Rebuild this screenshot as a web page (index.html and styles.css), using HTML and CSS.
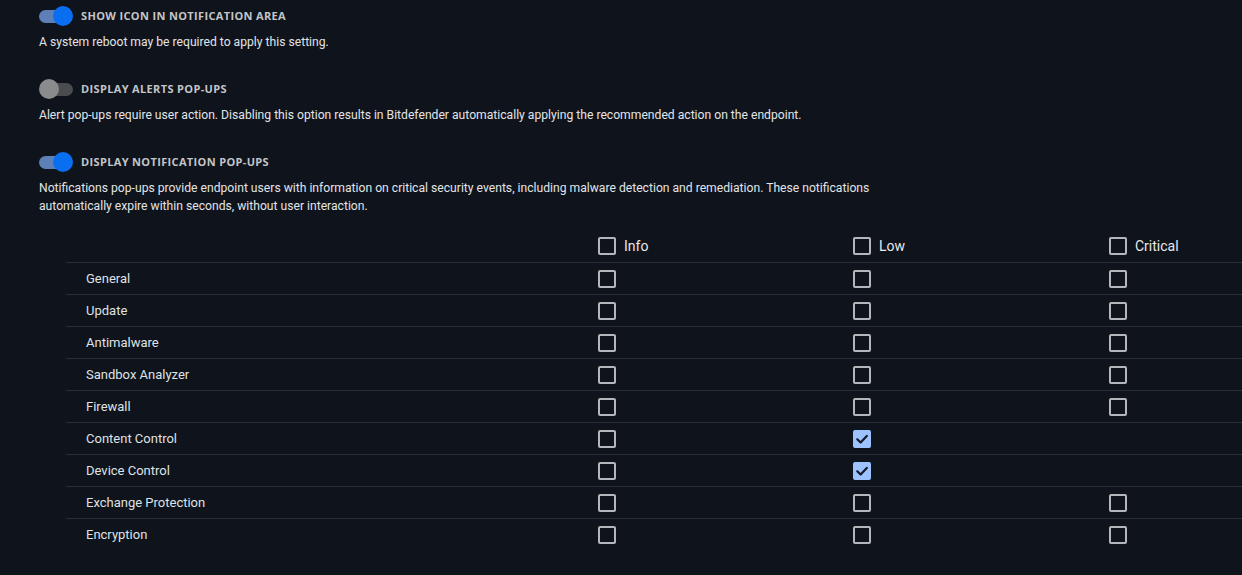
FILE: index.html
```html
<!DOCTYPE html>
<html>
<head>
<meta charset="utf-8">
<link rel="stylesheet" href="styles.css">
</head>
<body>
<div class="page">
  <section class="setting">
    <div class="setting-head">
      <span class="toggle on"><span class="knob"></span></span>
      <span class="setting-title">SHOW ICON IN NOTIFICATION AREA</span>
    </div>
    <p class="desc">A system reboot may be required to apply this setting.</p>
  </section>
  <section class="setting">
    <div class="setting-head">
      <span class="toggle off"><span class="knob"></span></span>
      <span class="setting-title">DISPLAY ALERTS POP-UPS</span>
    </div>
    <p class="desc">Alert pop-ups require user action. Disabling this option results in Bitdefender automatically applying the recommended action on the endpoint.</p>
  </section>
  <section class="setting last">
    <div class="setting-head">
      <span class="toggle on"><span class="knob"></span></span>
      <span class="setting-title">DISPLAY NOTIFICATION POP-UPS</span>
    </div>
    <p class="desc">Notifications pop-ups provide endpoint users with information on critical security events, including malware detection and remediation. These notifications automatically expire within seconds, without user interaction.</p>
  </section>

  <div class="grid">
    <div class="row head">
      <div class="cell label"></div>
      <div class="cell"><span class="cb"></span><span class="col-name">Info</span></div>
      <div class="cell"><span class="cb"></span><span class="col-name">Low</span></div>
      <div class="cell"><span class="cb"></span><span class="col-name">Critical</span></div>
    </div>
    <div class="row"><div class="cell label">General</div><div class="cell"><span class="cb"></span></div><div class="cell"><span class="cb"></span></div><div class="cell"><span class="cb"></span></div></div>
    <div class="row"><div class="cell label">Update</div><div class="cell"><span class="cb"></span></div><div class="cell"><span class="cb"></span></div><div class="cell"><span class="cb"></span></div></div>
    <div class="row"><div class="cell label">Antimalware</div><div class="cell"><span class="cb"></span></div><div class="cell"><span class="cb"></span></div><div class="cell"><span class="cb"></span></div></div>
    <div class="row"><div class="cell label">Sandbox Analyzer</div><div class="cell"><span class="cb"></span></div><div class="cell"><span class="cb"></span></div><div class="cell"><span class="cb"></span></div></div>
    <div class="row"><div class="cell label">Firewall</div><div class="cell"><span class="cb"></span></div><div class="cell"><span class="cb"></span></div><div class="cell"><span class="cb"></span></div></div>
    <div class="row"><div class="cell label">Content Control</div><div class="cell"><span class="cb"></span></div><div class="cell"><span class="cb checked"><svg viewBox="0 0 18 18" width="18" height="18"><path d="M4.3 9.3 L7.6 12.5 L13.8 5.9" fill="none" stroke="#151a24" stroke-width="2.2" stroke-linecap="round" stroke-linejoin="round"/></svg></span></div><div class="cell"></div></div>
    <div class="row"><div class="cell label">Device Control</div><div class="cell"><span class="cb"></span></div><div class="cell"><span class="cb checked"><svg viewBox="0 0 18 18" width="18" height="18"><path d="M4.3 9.3 L7.6 12.5 L13.8 5.9" fill="none" stroke="#151a24" stroke-width="2.2" stroke-linecap="round" stroke-linejoin="round"/></svg></span></div><div class="cell"></div></div>
    <div class="row"><div class="cell label">Exchange Protection</div><div class="cell"><span class="cb"></span></div><div class="cell"><span class="cb"></span></div><div class="cell"><span class="cb"></span></div></div>
    <div class="row"><div class="cell label">Encryption</div><div class="cell"><span class="cb"></span></div><div class="cell"><span class="cb"></span></div><div class="cell"><span class="cb"></span></div></div>
  </div>
</div>
</body>
</html>
```

FILE: styles.css
```css
html, body {
  margin: 0;
  padding: 0;
  background: #0f131b;
  overflow: hidden;
}
body {
  font-family: Roboto, "Liberation Sans", sans-serif;
  color: #dfe2e6;
}
.page {
  padding: 6px 0 0 39px;
}
.setting {
  margin-bottom: 28px;
}
.setting.last {
  margin-bottom: 15px;
}
.setting-head {
  display: flex;
  align-items: center;
  height: 20px;
}
.toggle {
  position: relative;
  width: 34px;
  height: 20px;
  margin-right: 8px;
  flex: none;
}
.toggle::before {
  content: "";
  position: absolute;
  left: 0;
  top: 4px;
  width: 31px;
  height: 13px;
  border-radius: 7px;
  background: #5e80b8;
}
.toggle.off::before {
  background: #4a4c50;
  left: 3px;
}
.knob {
  position: absolute;
  top: 0;
  width: 20px;
  height: 20px;
  border-radius: 50%;
  background: #0a6ef0;
}
.toggle.on .knob { left: 14px; }
.toggle.off .knob { left: 0; background: #8a8b8d; }
.setting-title {
  font-family: "Open Sans", sans-serif;
  font-weight: 700;
  font-size: 11px;
  color: #c3c5c8;
  letter-spacing: 0.35px;
  margin-top: -1px;
}
.desc {
  margin: 7px 0 0;
  font-size: 12.15px;
  line-height: 18px;
  max-width: 850px;
  color: #e2e4e7;
}
.grid {
  margin-left: 27px;
}
.row {
  display: grid;
  grid-template-columns: 532px 255px 256px 1fr;
  height: 32px;
  border-top: 1px solid #2a2e36;
  box-sizing: border-box;
}
.row.head {
  border-top: none;
  height: 32px;
}
.cell {
  display: flex;
  align-items: center;
  font-size: 13px;
  color: #dfe2e6;
  min-width: 0;
}
.cell.label {
  padding-left: 20px;
}
.cb {
  width: 18px;
  height: 18px;
  box-sizing: border-box;
  border: 2px solid #b4b6b9;
  border-radius: 2px;
  flex: none;
  display: block;
}
.cb.checked {
  background: #9cc3ff;
  border-color: #9cc3ff;
  position: relative;
}
.cb.checked svg {
  position: absolute;
  left: -2px;
  top: -2px;
}
.col-name {
  margin-left: 8px;
  font-size: 14px;
  color: #e6e8eb;
}
```
